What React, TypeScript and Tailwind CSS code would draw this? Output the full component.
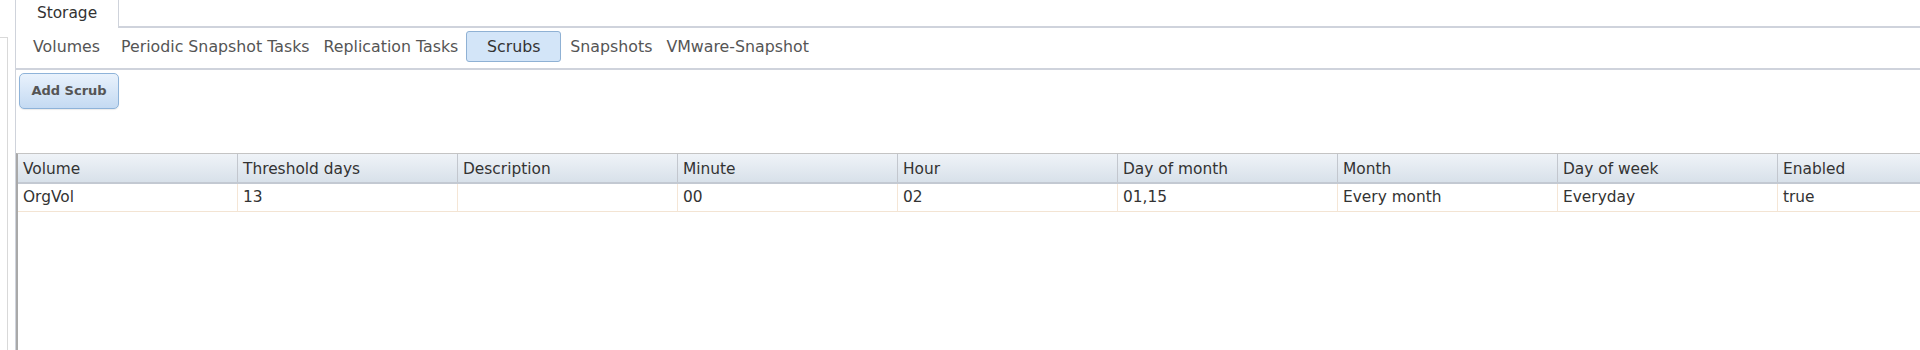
import React from 'react';

const subTabs = [
    { label: 'Volumes', extra: 'mr-[7px]' },
    { label: 'Periodic Snapshot Tasks', extra: '' },
    { label: 'Replication Tasks', extra: '' },
    { label: 'Scrubs', extra: '', active: true },
    { label: 'Snapshots', extra: 'ml-[2px]' },
    { label: 'VMware-Snapshot', extra: '' },
];

const columns = [
    'Volume',
    'Threshold days',
    'Description',
    'Minute',
    'Hour',
    'Day of month',
    'Month',
    'Day of week',
    'Enabled',
];

const rows = [['OrgVol', '13', '', '00', '02', '01,15', 'Every month', 'Everyday', 'true']];

export default function App() {
    return (
        <div
            className="w-[1920px] h-[350px] overflow-hidden bg-white flex text-[15.4px] text-[#333]"
            style={{ fontFamily: '"DejaVu Sans", Verdana, sans-serif' }}
        >
            {/* left sidebar edge */}
            <div className="w-[8px] shrink-0 mt-[37px] border-t border-r border-[#d9d9d9]" />
            <div className="w-[7px] shrink-0" />

            {/* main panel */}
            <div className="flex-1 min-w-0 flex flex-col border-l border-[#cfd3db]">
                {/* top tab */}
                <div className="flex h-[28px] shrink-0">
                    <div className="w-[103px] border-r border-[#cfd3db] flex items-center justify-center pb-[1px] text-[#333]">
                        Storage
                    </div>
                    <div className="flex-1 border-b-2 border-[#cfd3dc]" />
                </div>

                {/* sub tabs */}
                <div className="flex items-center pl-[10px] pt-[3px] pb-[6px] border-b-2 border-[#cfd3dc] shrink-0 text-[15.8px]">
                    {subTabs.map((t) =>
                        t.active ? (
                            <div
                                key={t.label}
                                className="h-[31px] w-[95px] ml-[1px] flex items-center justify-center rounded-[3px] border border-[#8fb1d4] bg-[#d3e5f8] text-[#333]"
                            >
                                {t.label}
                            </div>
                        ) : (
                            <div key={t.label} className={`px-[7px] text-[#555] whitespace-nowrap ${t.extra}`}>
                                {t.label}
                            </div>
                        )
                    )}
                </div>

                {/* toolbar */}
                <div className="pl-[3px] pt-[3px] shrink-0">
                    <button className="h-[36px] w-[100px] rounded-[5px] border border-[#8eb3d9] bg-gradient-to-b from-[#e9f2fc] to-[#c4daf2] text-[13px] font-bold text-[#555] shadow-[0_1px_1px_rgba(0,0,0,0.08)]">
                        Add Scrub
                    </button>
                </div>

                {/* grid */}
                <div className="mt-[44px] flex-1 border-l-2 border-t border-l-[#a9a9a9] border-t-[#c4c4c4] overflow-hidden">
                    <div className="flex w-max h-[30px] bg-gradient-to-b from-[#eff3f8] to-[#d8e1ea] border-b-2 border-[#c3c9d2]">
                        {columns.map((c) => (
                            <div
                                key={c}
                                className="w-[220px] shrink-0 border-r border-[#c3c7ce] pl-[5px] pt-[4px] flex items-center whitespace-nowrap"
                            >
                                {c}
                            </div>
                        ))}
                    </div>
                    {rows.map((r, i) => (
                        <div key={i} className="flex w-max h-[28px] border-b border-[#f3e4d3]">
                            {r.map((v, j) => (
                                <div
                                    key={j}
                                    className="w-[220px] shrink-0 border-r border-[#f5e6d6] pl-[5px] pt-[1px] flex items-center whitespace-nowrap"
                                >
                                    {v}
                                </div>
                            ))}
                        </div>
                    ))}
                </div>
            </div>
        </div>
    );
}
